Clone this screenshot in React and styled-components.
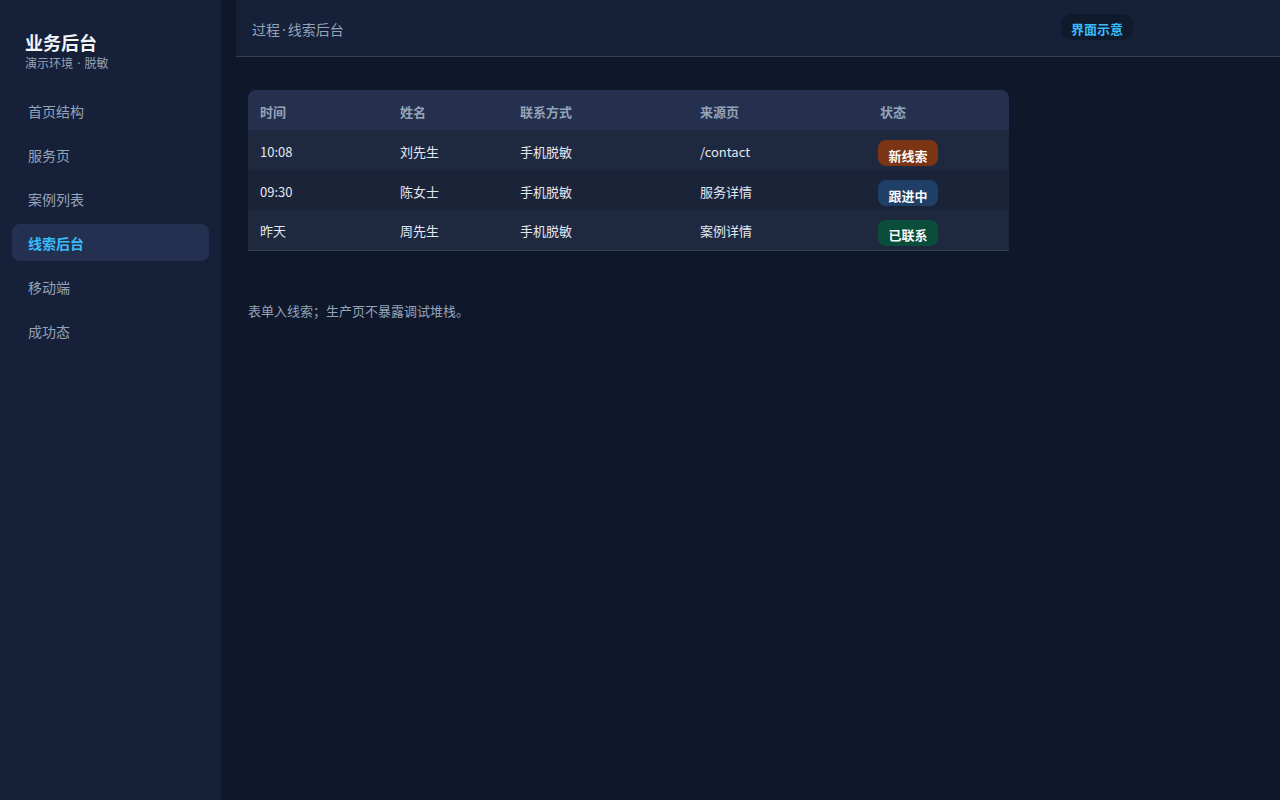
import React from "react";
import styled, { createGlobalStyle } from "styled-components";

const Global = createGlobalStyle`
  html, body { margin: 0; padding: 0; background: #0f172a; }
  body { font-family: "Noto Sans CJK SC", "Noto Sans", sans-serif; }
  * { box-sizing: border-box; }
`;

const Shell = styled.div`
  display: flex;
  width: 1280px;
  height: 800px;
  background: #0f172a;
`;

const Sidebar = styled.aside`
  width: 221px;
  flex: none;
  background: #162038;
  padding: 30px 12px 0 12px;
  display: flex;
  flex-direction: column;
`;

const Brand = styled.div`
  padding-left: 13px;
  margin-bottom: 20px;
`;

const BrandTitle = styled.div`
  font-size: 18px;
  font-weight: 700;
  color: #f1f5f9;
  line-height: 24px;
`;

const BrandSub = styled.div`
  font-size: 12px;
  color: #94a3b8;
  line-height: 16px;
  margin-top: 1px;
`;

const Dot = styled.span`
  font-family: "Noto Sans", sans-serif;
  margin: 0 ${(p) => p.$gap || 2}px;
`;

const Nav = styled.nav`
  display: flex;
  flex-direction: column;
  gap: 7px;
`;

const NavItem = styled.div`
  height: 37px;
  display: flex;
  align-items: center;
  padding-left: 16px;
  border-radius: 8px;
  font-size: 14px;
  color: ${(p) => (p.$active ? "#38bdf8" : "#94a3b8")};
  font-weight: ${(p) => (p.$active ? 700 : 400)};
  background: ${(p) => (p.$active ? "#243050" : "transparent")};
`;

const Main = styled.main`
  flex: 1;
  margin-left: 15px;
  display: flex;
  flex-direction: column;
`;

const Header = styled.header`
  height: 57px;
  background: #162038;
  border-bottom: 1px solid #334155;
  display: flex;
  align-items: center;
  padding: 0 147px 0 16px;
`;

const Crumb = styled.div`
  font-size: 14px;
  color: #94a3b8;
  flex: 1;
  padding-top: 1px;
`;

const Tag = styled.div`
  align-self: flex-start;
  margin-top: 14px;
  height: 26px;
  padding: 3px 10px 0 10px;
  border-radius: 10px;
  background: #0f1a2c;
  color: #38bdf8;
  font-size: 13px;
  font-weight: 700;
  display: flex;
  align-items: center;
`;

const Content = styled.section`
  padding: 33px 12px 0 12px;
`;

const Table = styled.table`
  width: 761px;
  border-collapse: collapse;
  border-bottom: 1px solid #334155;
  font-size: 13px;
`;

const Th = styled.th`
  height: 40px;
  background: #25304f;
  color: #94a3b8;
  font-weight: 700;
  text-align: left;
  padding: 2px 12px 0 12px;
  width: ${(p) => p.$w}px;
  &:first-child { border-top-left-radius: 8px; }
  &:last-child { border-top-right-radius: 8px; }
`;

const Tr = styled.tr`
  background: ${(p) => (p.$odd ? "#1b2339" : "#1e2940")};
`;

const Td = styled.td`
  height: 40px;
  padding: ${(p) => (p.$status ? "6px" : "2px")} 12px 0 12px;
  color: #e2e8f0;
  vertical-align: middle;
`;

const tones = {
  orange: "#7b3414",
  blue: "#1f3f66",
  green: "#0a4d3a",
};

const Badge = styled.span`
  display: inline-flex;
  align-items: center;
  justify-content: center;
  vertical-align: top;
  width: 60px;
  height: 26px;
  margin-left: -2px;
  padding-top: 4px;
  border-radius: 8px;
  background: ${(p) => tones[p.$tone]};
  color: #f8fafc;
  font-weight: 700;
  font-size: 13px;
`;

const Note = styled.p`
  margin: 50px 0 0 0;
  font-size: 13px;
  color: #94a3b8;
`;

const navs = ["首页结构", "服务页", "案例列表", "线索后台", "移动端", "成功态"];

const rows = [
  ["10:08", "刘先生", "手机脱敏", "/contact", "新线索", "orange"],
  ["09:30", "陈女士", "手机脱敏", "服务详情", "跟进中", "blue"],
  ["昨天", "周先生", "手机脱敏", "案例详情", "已联系", "green"],
];

export default function App() {
  return (
    <>
      <Global />
      <Shell>
        <Sidebar>
          <Brand>
            <BrandTitle>业务后台</BrandTitle>
            <BrandSub>
              演示环境 <Dot $gap={1.5}>·</Dot> 脱敏
            </BrandSub>
          </Brand>
          <Nav>
            {navs.map((n) => (
              <NavItem key={n} $active={n === "线索后台"}>
                {n}
              </NavItem>
            ))}
          </Nav>
        </Sidebar>
        <Main>
          <Header>
            <Crumb>
              过程<Dot $gap={2}>·</Dot>线索后台
            </Crumb>
            <Tag>界面示意</Tag>
          </Header>
          <Content>
            <Table>
              <thead>
                <tr>
                  <Th $w={140}>时间</Th>
                  <Th $w={120}>姓名</Th>
                  <Th $w={180}>联系方式</Th>
                  <Th $w={180}>来源页</Th>
                  <Th $w={141}>状态</Th>
                </tr>
              </thead>
              <tbody>
                {rows.map((r, i) => (
                  <Tr key={i} $odd={i % 2 === 1}>
                    <Td>{r[0]}</Td>
                    <Td>{r[1]}</Td>
                    <Td>{r[2]}</Td>
                    <Td>{r[3]}</Td>
                    <Td $status>
                      <Badge $tone={r[5]}>{r[4]}</Badge>
                    </Td>
                  </Tr>
                ))}
              </tbody>
            </Table>
            <Note>表单入线索；生产页不暴露调试堆栈。</Note>
          </Content>
        </Main>
      </Shell>
    </>
  );
}
